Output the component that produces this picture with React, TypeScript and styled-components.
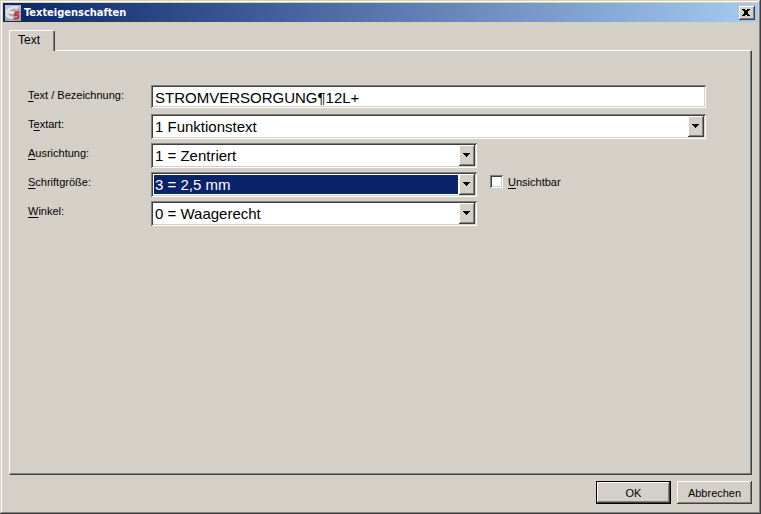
import React, { useState } from "react";
import styled, { createGlobalStyle, css } from "styled-components";

const face = "#d4d0c8";
const light = "#ffffff";
const shadow = "#808080";
const dark = "#404040";
const navy = "#0a246a";

const GlobalStyle = createGlobalStyle`
  * { box-sizing: border-box; }
  body {
    margin: 0;
    background: ${face};
    color: #000;
    font: 12px/16px "Liberation Sans", Arial, sans-serif;
  }
  button, input, select { font: inherit; color: inherit; margin: 0; }
  u { text-underline-offset: 2px; }
`;

const raised = css`
  border: 0;
  background: ${face};
  box-shadow: inset -1px -1px ${dark}, inset 1px 1px ${light}, inset -2px -2px ${shadow};
`;

const sunken = css`
  border: 0;
  background: #fff;
  box-shadow: inset 1px 1px ${shadow}, inset -1px -1px ${light}, inset 2px 2px ${dark},
    inset -2px -2px ${face};
`;

const Dialog = styled.main`
  display: flex;
  flex-direction: column;
  min-height: 100vh;
  padding: 3px 3px 10px;
  background: ${face};
  box-shadow: inset -1px -1px ${dark}, inset 1px 1px ${face}, inset -2px -2px ${shadow},
    inset 2px 2px ${light};
`;

const TitleBar = styled.header`
  display: flex;
  align-items: center;
  gap: 3px;
  height: 19px;
  padding: 0 3px 0 2px;
  background: linear-gradient(to right, ${navy}, #a6caf0);
`;

const Title = styled.h1`
  flex: 1;
  margin: 0;
  color: #fff;
  font: bold 11px/16px "DejaVu Sans Condensed", "DejaVu Sans", Tahoma, sans-serif;
`;

const CloseButton = styled.button`
  ${raised}
  display: grid;
  place-items: center;
  width: 16px;
  height: 14px;
  padding: 0 2px 1px 0;
`;

const Content = styled.div`
  display: flex;
  flex: 1;
  flex-direction: column;
  padding: 8px 6px 0;
`;

const TabList = styled.div`
  display: flex;
`;

const Tab = styled.button`
  z-index: 1;
  height: 21px;
  margin-bottom: -1px;
  padding: 0 14px 2px 8px;
  border: 1px solid ${light};
  border-right: 1px solid ${dark};
  border-bottom: 0;
  border-radius: 2px 2px 0 0;
  background: ${face};
  box-shadow: inset -1px 0 ${shadow};
`;

const Panel = styled.section`
  flex: 1;
  padding: 34px 45px 20px 18px;
  border: 1px solid ${light};
  border-right-color: ${dark};
  border-bottom-color: ${dark};
  box-shadow: inset -1px -1px ${shadow};
`;

const Form = styled.div`
  display: grid;
  grid-template-columns: 119px 326px 1fr;
  grid-auto-rows: 25px;
  row-gap: 4px;
  column-gap: 4px;
`;

const Label = styled.label`
  grid-column: 1;
  padding-top: 2px;
  font-size: 11px;
`;

const Field = styled.div<{ $wide?: boolean }>`
  position: relative;
  grid-column: ${(p) => (p.$wide ? "2 / -1" : "2")};
`;

const TextBox = styled.input`
  ${sunken}
  display: block;
  width: 100%;
  height: 23px;
  padding: 2px 4px 0;
  font-size: 15px;
  outline: 0;
`;

const Select = styled.select<{ $active?: boolean }>`
  ${sunken}
  appearance: none;
  display: block;
  width: 100%;
  height: 25px;
  padding: 3px 19px 3px 3px;
  background: ${(p) => (p.$active ? navy : "#fff")} content-box;
  color: ${(p) => (p.$active ? "#fff" : "#000")};
  font-size: 15px;
  line-height: 19px;
  text-indent: 1px;
  outline: 0;
`;

const SelectBack = styled.div`
  background: #fff;
`;

const Arrow = styled.span`
  ${raised}
  position: absolute;
  top: 2px;
  right: 2px;
  bottom: 2px;
  display: grid;
  place-items: center;
  width: 16px;
  padding: 0 1px 1px 0;
  pointer-events: none;
`;

const CheckLabel = styled.label`
  display: flex;
  align-items: flex-start;
  gap: 5px;
  padding: 2px 0 0 9px;
  font-size: 11px;
`;

const CheckBox = styled.input`
  ${sunken}
  appearance: none;
  width: 13px;
  height: 13px;
  margin-top: 1px;
  &:checked::after {
    content: "✓";
    display: block;
    font: bold 11px/13px "DejaVu Sans", sans-serif;
    text-align: center;
  }
`;

const Footer = styled.footer`
  display: flex;
  justify-content: flex-end;
  gap: 6px;
  padding: 6px 6px 0;
`;

const PushButton = styled.button<{ $primary?: boolean }>`
  ${raised}
  width: 75px;
  height: 23px;
  padding: 0;
  font-size: 11px;
  ${(p) =>
    p.$primary &&
    css`
      border: 1px solid #000;
    `}
`;

function AppIcon() {
  return (
    <svg width="16" height="16" viewBox="0 0 16 16" aria-hidden="true">
      <rect width="16" height="16" fill="#a9a8b0" />
      <path d="M0 0h7L3 3 0 8z" fill="#c6c5cc" />
      <path d="M11 0h5v6l-3-3z" fill="#bdbcc4" />
      <path
        d="M13 3C8 1 2 4 2 8.5c0 4 4 4.500 6 3.500"
        fill="none"
        stroke="#dedee3"
        strokeWidth="3"
      />
      <path d="M4 7.500h5" stroke="#f6f6f8" strokeWidth="2" />
      <path
        d="M14.500 7.500H11l-1 2.500c2.500-.5 4 .3 3.500 2-.5 1.800-3 2-4.500 1.300"
        fill="none"
        stroke="#d02c3a"
        strokeWidth="2"
      />
    </svg>
  );
}

function CloseIcon() {
  return (
    <svg width="8" height="7" viewBox="0 0 8 7" shapeRendering="crispEdges" aria-hidden="true">
      <path d="M0 0h3v1H0zM5 0h3v1H5zM1 1h6v1H1zM2 2h4v3H2zM1 5h6v1H1zM0 6h3v1H0zM5 6h3v1H5z" />
    </svg>
  );
}

function DownArrow() {
  return (
    <svg width="7" height="4" viewBox="0 0 7 4" shapeRendering="crispEdges" aria-hidden="true">
      <path d="M0 0h7v1H0zM1 1h5v1H1zM2 2h3v1H2zM3 3h1v1H3z" />
    </svg>
  );
}

type DropDownProps = { id: string; options: string[]; wide?: boolean; active?: boolean };

function DropDown({ id, options, wide, active }: DropDownProps) {
  const [value, setValue] = useState(options[0]);
  return (
    <Field $wide={wide}>
      <SelectBack>
        <Select id={id} $active={active} value={value} onChange={(e) => setValue(e.target.value)}>
          {options.map((o) => (
            <option key={o}>{o}</option>
          ))}
        </Select>
      </SelectBack>
      <Arrow>
        <DownArrow />
      </Arrow>
    </Field>
  );
}

export default function App() {
  const [text, setText] = useState("STROMVERSORGUNG¶12L+");
  const [hidden, setHidden] = useState(false);
  return (
    <>
      <GlobalStyle />
      <Dialog>
        <TitleBar>
          <AppIcon />
          <Title>Texteigenschaften</Title>
          <CloseButton type="button" aria-label="Schließen">
            <CloseIcon />
          </CloseButton>
        </TitleBar>
        <Content>
          <TabList role="tablist">
            <Tab type="button" role="tab" id="tab-text" aria-selected="true" aria-controls="panel-text">
              Text
            </Tab>
          </TabList>
          <Panel role="tabpanel" id="panel-text" aria-labelledby="tab-text">
            <Form>
              <Label htmlFor="text"><u>T</u>ext / Bezeichnung:</Label>
              <Field $wide>
                <TextBox id="text" value={text} onChange={(e) => setText(e.target.value)} />
              </Field>
              <Label htmlFor="kind">T<u>e</u>xtart:</Label>
              <DropDown id="kind" wide options={["1 Funktionstext"]} />
              <Label htmlFor="align"><u>A</u>usrichtung:</Label>
              <DropDown id="align" options={["1 = Zentriert"]} />
              <Label htmlFor="size"><u>S</u>chriftgröße:</Label>
              <DropDown id="size" active options={["3 = 2,5 mm"]} />
              <CheckLabel>
                <CheckBox
                  type="checkbox"
                  checked={hidden}
                  onChange={(e) => setHidden(e.target.checked)}
                />
                <span><u>U</u>nsichtbar</span>
              </CheckLabel>
              <Label htmlFor="angle"><u>W</u>inkel:</Label>
              <DropDown id="angle" options={["0 = Waagerecht"]} />
            </Form>
          </Panel>
        </Content>
        <Footer>
          <PushButton type="submit" $primary>OK</PushButton>
          <PushButton type="button">Abbrechen</PushButton>
        </Footer>
      </Dialog>
    </>
  );
}
